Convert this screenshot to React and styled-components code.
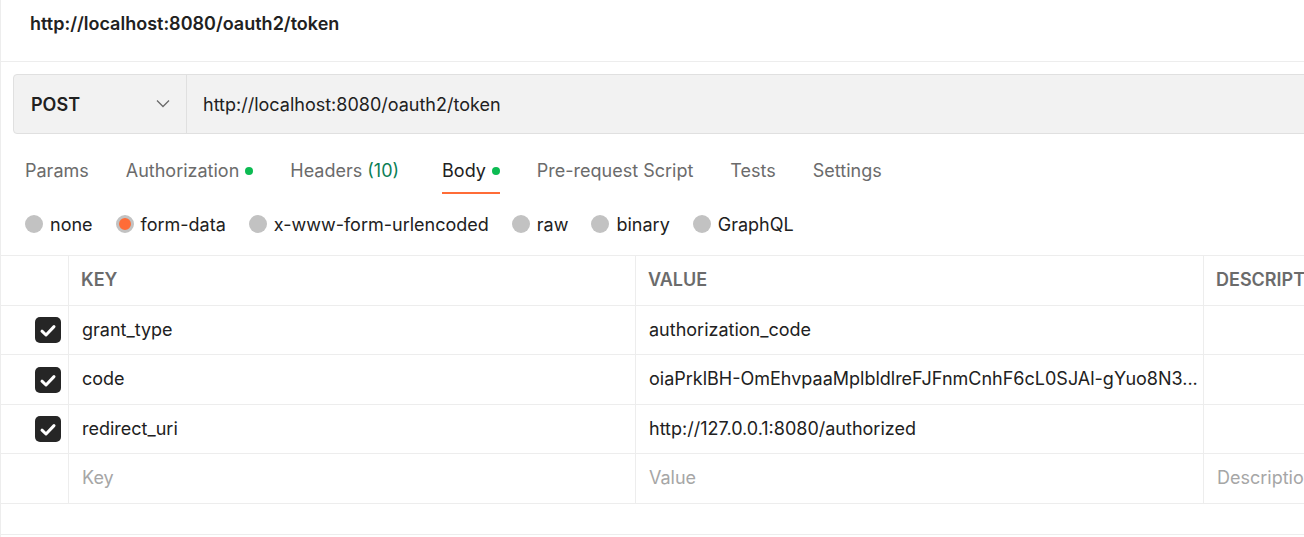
import React from "react";
import styled, { createGlobalStyle } from "styled-components";

const GlobalStyle = createGlobalStyle`
  html, body {
    margin: 0;
    padding: 0;
    background: #ffffff;
    font-family: Inter, "Noto Sans", sans-serif;
    color: #212121;
  }
`;

const tabs = [
  { label: "Params" },
  { label: "Authorization", dot: true },
  { label: "Headers", count: "(10)" },
  { label: "Body", dot: true, active: true },
  { label: "Pre-request Script" },
  { label: "Tests" },
  { label: "Settings" },
];

const bodyTypes = [
  { label: "none" },
  { label: "form-data", checked: true },
  { label: "x-www-form-urlencoded" },
  { label: "raw" },
  { label: "binary" },
  { label: "GraphQL" },
];

const rows = [
  { key: "grant_type", value: "authorization_code" },
  {
    key: "code",
    value: "oiaPrklBH-OmEhvpaaMplbldlreFJFnmCnhF6cL0SJAl-gYuo8N3...",
  },
  { key: "redirect_uri", value: "http://127.0.0.1:8080/authorized" },
];

const App = () => {
  return (
    <>
      <GlobalStyle />
      <StyledPage>
        <StyledHeader>http://localhost:8080/oauth2/token</StyledHeader>
        <StyledRequestBar>
          <StyledMethod>
            <span>POST</span>
            <svg width="14" height="10" viewBox="0 0 14 10" fill="none">
              <path d="M1 1.5l6 6 6-6" stroke="#6b6b6b" strokeWidth="1.3" />
            </svg>
          </StyledMethod>
          <StyledUrl>http://localhost:8080/oauth2/token</StyledUrl>
        </StyledRequestBar>

        <StyledTabs>
          {tabs.map((t) => (
            <Tab key={t.label} $active={t.active}>
              {t.label}
              {t.count && <Count>{t.count}</Count>}
              {t.dot && <Dot />}
            </Tab>
          ))}
        </StyledTabs>

        <StyledRadios>
          {bodyTypes.map((b) => (
            <RadioItem key={b.label}>
              <Radio $checked={b.checked} />
              {b.label}
            </RadioItem>
          ))}
        </StyledRadios>

        <StyledTable>
          <Row>
            <Cell />
            <HeadCell>KEY</HeadCell>
            <HeadCell>VALUE</HeadCell>
            <HeadCell>DESCRIPT</HeadCell>
          </Row>
          {rows.map((r) => (
            <Row key={r.key}>
              <CheckCell>
                <Checkbox>
                  <svg width="26" height="26" viewBox="0 0 26 26" fill="none">
                    <path
                      d="M7 14.2l4 3.8 8-8.4"
                      stroke="#ffffff"
                      strokeWidth="3"
                      strokeLinecap="round"
                      strokeLinejoin="round"
                    />
                  </svg>
                </Checkbox>
              </CheckCell>
              <Cell>{r.key}</Cell>
              <Cell>{r.value}</Cell>
              <Cell />
            </Row>
          ))}
          <Row>
            <Cell />
            <Cell $placeholder>Key</Cell>
            <Cell $placeholder>Value</Cell>
            <Cell $placeholder>Descriptio</Cell>
          </Row>
        </StyledTable>
        <StyledFooter />
      </StyledPage>
    </>
  );
};

const StyledPage = styled.div`
  width: 1304px;
  height: 537px;
  overflow: hidden;
  border-left: 1px solid #ededed;
  box-sizing: border-box;
`;

const StyledHeader = styled.div`
  height: 62px;
  box-sizing: border-box;
  padding: 12px 0 0 29px;
  font-size: 18px;
  line-height: 24px;
  font-weight: 600;
  color: #212121;
  border-bottom: 1px solid #ededed;
`;

const StyledRequestBar = styled.div`
  margin: 12px 0 0 12px;
  width: 1320px;
  height: 60px;
  display: flex;
  align-items: stretch;
  background: #f2f2f2;
  border: 1px solid #e0e0e0;
  border-radius: 4px;
  box-sizing: border-box;
`;

const StyledMethod = styled.div`
  width: 173px;
  display: flex;
  align-items: center;
  justify-content: space-between;
  padding: 0 16px 0 17px;
  box-sizing: border-box;
  border-right: 1px solid #e0e0e0;
  font-size: 18px;
  font-weight: 600;
  color: #212121;
`;

const StyledUrl = styled.div`
  display: flex;
  align-items: center;
  padding-left: 16px;
  font-size: 18px;
  color: #212121;
`;

const StyledTabs = styled.div`
  display: flex;
  gap: 37px;
  padding-left: 24px;
  height: 60px;
`;

const Tab = styled.div`
  display: flex;
  align-items: flex-start;
  height: 100%;
  box-sizing: border-box;
  padding-top: 26px;
  font-size: 18px;
  line-height: 22px;
  color: ${(p) => (p.$active ? "#212121" : "#6b6b6b")};
  border-bottom: 2px solid ${(p) => (p.$active ? "#ff6c37" : "transparent")};
`;

const Count = styled.span`
  color: #0c7f56;
  margin: 0 6px 0 5px;
`;

const Dot = styled.span`
  width: 8px;
  height: 8px;
  border-radius: 50%;
  background: #0cbb52;
  margin: 7px 0 0 6px;
`;

const StyledRadios = styled.div`
  display: flex;
  gap: 23px;
  padding: 17px 0 0 24px;
  height: 61px;
  box-sizing: border-box;
`;

const RadioItem = styled.label`
  display: flex;
  align-items: center;
  gap: 7px;
  height: 26px;
  font-size: 18px;
  color: #212121;
`;

const Radio = styled.span`
  width: 18px;
  height: 18px;
  border-radius: 50%;
  box-sizing: border-box;
  background: ${(p) => (p.$checked ? "#ff6c37" : "#c2c2c2")};
  border: ${(p) => (p.$checked ? "3px solid #c2c2c2" : "none")};
`;

const StyledTable = styled.div`
  border-top: 1px solid #ededed;
`;

const Row = styled.div`
  display: grid;
  grid-template-columns: 68px 567px 568px 200px;
  height: 50px;
  box-sizing: border-box;
  border-bottom: 1px solid #ededed;
  &:nth-child(even) {
    height: 49px;
  }
`;

const Cell = styled.div`
  display: flex;
  align-items: center;
  padding: 0 12px 2px 13px;
  border-right: 1px solid #ededed;
  font-size: 18px;
  color: ${(p) => (p.$placeholder ? "#a6a6a6" : "#212121")};
  overflow: hidden;
  white-space: nowrap;
  min-width: 0;
`;

const HeadCell = styled(Cell)`
  font-weight: 600;
  color: #6b6b6b;
  padding-left: 12px;
`;

const CheckCell = styled(Cell)`
  justify-content: flex-end;
  padding: 0 7px 0 0;
`;

const Checkbox = styled.span`
  width: 26px;
  height: 26px;
  border-radius: 5px;
  background: #262626;
  display: flex;
  align-items: center;
  justify-content: center;
`;

const StyledFooter = styled.div`
  height: 30px;
  border-bottom: 1px solid #ededed;
`;

export default App;
